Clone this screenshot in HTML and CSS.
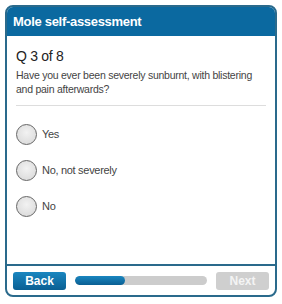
FILE: index.html
```html
<!DOCTYPE html>
<html lang="en">
<head>
  <meta charset="UTF-8">
  <title>Mole self-assessment</title>
  <link rel="stylesheet" href="styles.css">
</head>
<body>
  <div class="card">
    <div class="card-head">Mole self-assessment</div>
    <div class="card-body">
      <h2 class="q-num">Q 3 of 8</h2>
      <p class="q-text">Have you ever been severely sunburnt, with blistering and pain afterwards?</p>
      <ul class="answers">
        <li><span class="radio"></span>Yes</li>
        <li><span class="radio"></span>No, not severely</li>
        <li><span class="radio"></span>No</li>
      </ul>
    </div>
    <div class="card-foot">
      <button class="btn btn-back">Back</button>
      <div class="progress"><div class="progress-fill" style="width: 38%"></div></div>
      <button class="btn btn-next" disabled>Next</button>
    </div>
  </div>
</body>
</html>
```

FILE: styles.css
```css
body {
  margin: 0;
  padding: 5px 5px 0 5px;
  background: #fff;
  font-family: "Liberation Sans", Arial, sans-serif;
  color: #333;
}
.card {
  width: 268px;
  height: 288px;
  border: 2px solid #2a6a8c;
  border-radius: 8px;
  display: flex;
  flex-direction: column;
  overflow: hidden;
}
.card-head {
  background: #0b69a0;
  color: #fff;
  font-weight: bold;
  font-size: 13px;
  letter-spacing: -0.3px;
  height: 29px;
  line-height: 29px;
  padding-left: 6px;
  flex-shrink: 0;
}
.card-body {
  flex: 1;
  padding: 0 9px;
}
.q-num {
  margin: 12px 0 0;
  font-size: 14px;
  letter-spacing: -0.3px;
  font-weight: normal;
  color: #222;
}
.q-text {
  margin: 4px 0 0;
  font-size: 10.5px;
  letter-spacing: -0.25px;
  line-height: 14px;
  color: #444;
  padding-bottom: 9px;
  border-bottom: 1px solid #ddd;
}
.answers {
  list-style: none;
  margin: 17px 0 0;
  padding: 0;
}
.answers li {
  display: flex;
  align-items: center;
  height: 22px;
  margin-bottom: 14px;
  font-size: 11px;
  letter-spacing: -0.3px;
  color: #444;
}
.radio {
  width: 19px;
  height: 19px;
  border: 1.5px solid #666;
  border-radius: 50%;
  background: radial-gradient(circle at 50% 40%, #f2f2f2, #d6d6d6);
  margin-right: 5px;
}
.card-foot {
  border-top: 2px solid #2a6a8c;
  height: 29px;
  display: flex;
  align-items: center;
  padding: 0 6px;
  gap: 9px;
  flex-shrink: 0;
}
.btn {
  width: 53px;
  height: 18px;
  border: none;
  border-radius: 3px;
  font-family: "Liberation Sans", Arial, sans-serif;
  font-weight: bold;
  font-size: 12px;
  color: #fff;
  padding: 0;
}
.btn-back {
  background: linear-gradient(#1a86c0, #0a5f93);
}
.btn-next {
  background: #cfcfcf;
  color: #f4f4f4;
}
.progress {
  flex: 1;
  height: 9px;
  background: #ccc;
  border-radius: 5px;
  overflow: hidden;
}
.progress-fill {
  height: 100%;
  background: linear-gradient(#1a86c0, #0a5f93);
  border-radius: 5px;
}
```
